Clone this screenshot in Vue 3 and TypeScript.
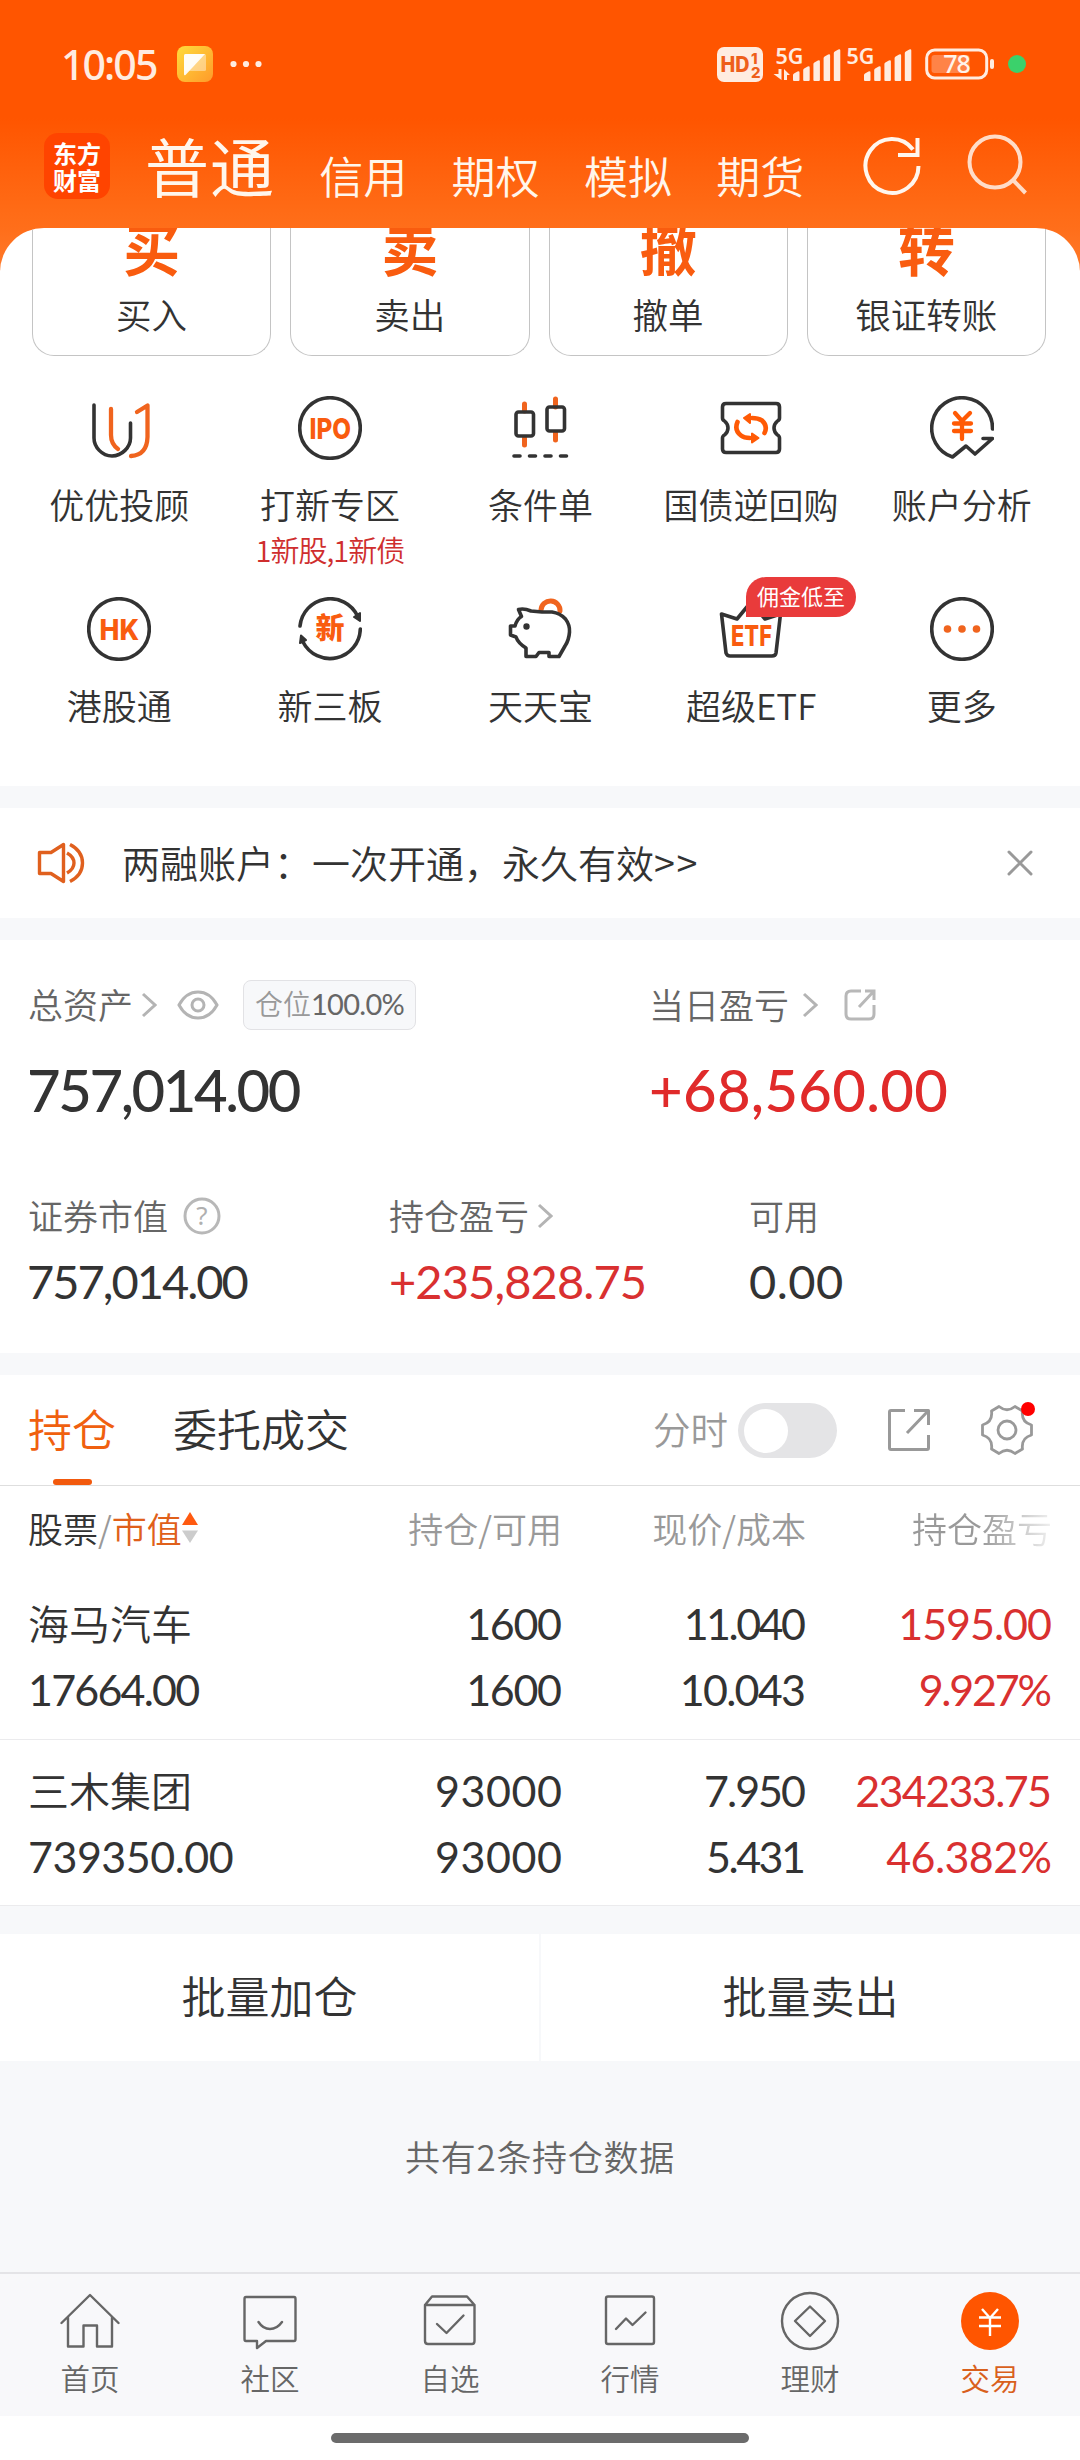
<script setup lang="ts">
interface Cell { text: string; ls: number }
interface Holding { name: string; value: Cell; hold: Cell; avail: Cell; price: Cell; cost: Cell; profit: Cell; ratio: Cell }

const accounts: string[] = ['信用', '期权', '模拟', '期货']
const quick = [
  { glyph: '买', label: '买入' },
  { glyph: '卖', label: '卖出' },
  { glyph: '撤', label: '撤单' },
  { glyph: '转', label: '银证转账' },
]
const tools: { id: string; label: string; sub?: string; badge?: string }[] = [
  { id: 'uu', label: '优优投顾' },
  { id: 'ipo', label: '打新专区', sub: '1新股,1新债' },
  { id: 'candle', label: '条件单' },
  { id: 'bond', label: '国债逆回购' },
  { id: 'analysis', label: '账户分析' },
  { id: 'hk', label: '港股通' },
  { id: 'neeq', label: '新三板' },
  { id: 'pig', label: '天天宝' },
  { id: 'etf', label: '超级ETF', badge: '佣金低至' },
  { id: 'more', label: '更多' },
]
const holdings: Holding[] = [
  {
    name: '海马汽车',
    value: { text: '17664.00', ls: -1.8 },
    hold: { text: '1600', ls: -1.3 },
    avail: { text: '1600', ls: -1.3 },
    price: { text: '11.040', ls: -2.5 },
    cost: { text: '10.043', ls: -1.7 },
    profit: { text: '1595.00', ls: -1 },
    ratio: { text: '9.927%', ls: -2.2 },
  },
  {
    name: '三木集团',
    value: { text: '739350.00', ls: -0.5 },
    hold: { text: '93000', ls: 0.6 },
    avail: { text: '93000', ls: 0.6 },
    price: { text: '7.950', ls: -2 },
    cost: { text: '5.431', ls: -2.5 },
    profit: { text: '234233.75', ls: -1.6 },
    ratio: { text: '46.382%', ls: -0.6 },
  },
]
const nav = [
  { id: 'home', label: '首页' },
  { id: 'community', label: '社区' },
  { id: 'watch', label: '自选' },
  { id: 'market', label: '行情' },
  { id: 'wealth', label: '理财' },
  { id: 'trade', label: '交易' },
]
const bars = [8, 13, 19, 25, 30]
const track = (c: Cell) => ({ letterSpacing: c.ls + 'px', marginRight: -c.ls + 'px' })
</script>

<template>
  <div class="page">
    <header class="top">
      <div class="status">
        <span class="time">10:05</span>
        <svg class="note" width="36" height="36" viewBox="0 0 36 36">
          <defs>
            <linearGradient id="noteFill" x1="0" y1="0" x2="1" y2="1">
              <stop offset="0" stop-color="#ffdc3c" /><stop offset="1" stop-color="#ff9a2a" />
            </linearGradient>
          </defs>
          <rect width="36" height="36" rx="8" fill="url(#noteFill)" />
          <rect x="7" y="8" width="22" height="17" rx="1.5" fill="#fff" opacity=".4" />
          <path d="M7 9.500Q7 8 8.500 8H28L8.500 29Q7 30 7 28Z" fill="#fff" opacity=".93" />
        </svg>
        <svg class="dots" width="32" height="8" viewBox="0 0 32 8" fill="#ffece0">
          <circle cx="3.500" cy="4" r="3.100" /><circle cx="16" cy="4" r="3.100" /><circle cx="28.500" cy="4" r="3.100" />
        </svg>
        <svg class="hd" width="46" height="35" viewBox="0 0 46 35">
          <rect width="46" height="35" rx="7" fill="#ffece0" />
          <text x="3.500" y="25" textLength="29" lengthAdjust="spacingAndGlyphs" class="hd-main">HD</text>
          <text x="34" y="16.500" class="hd-sub">1</text>
          <text x="34" y="31" class="hd-sub">2</text>
        </svg>
        <div v-for="sim in 2" :key="sim" class="sim">
          <svg width="68" height="36" viewBox="0 0 68 36" fill="#ffece0">
            <text x="1.500" y="17.500" class="net" textLength="28" lengthAdjust="spacingAndGlyphs">5G</text>
            <path v-if="sim === 1" d="M4.500 23h3v11L-.5 28h5ZM10 34V23l6 6h-3v5Z" />
            <path v-for="(h, i) in bars" :key="h" :d="`M${19 + i * 10.200} 34v${-h + 3}q0-1 1-1.600l3.500-2q2-.8 2 1v${h - 0.400}q0 1-1 1h-4.500q-1 0-1-1Z`" />
          </svg>
        </div>
        <svg class="battery" width="70" height="32" viewBox="0 0 70 32">
          <rect x="1.700" y="2" width="60" height="28" rx="8" fill="none" stroke="#ffece0" stroke-width="3" />
          <rect x="6.500" y="7" width="38" height="18" rx="3" fill="#ff8347" />
          <rect x="65" y="11" width="4" height="10" rx="2" fill="#ffece0" />
          <text x="31.500" y="25" text-anchor="middle" class="charge">78</text>
        </svg>
        <span class="live"></span>
      </div>
      <div class="nav-top">
        <div class="logo"><span>东方</span><span>财富</span></div>
        <h1>普通</h1>
        <span v-for="a in accounts" :key="a" class="account">{{ a }}</span>
        <svg class="refresh" width="64" height="64" viewBox="0 0 64 64" fill="none" stroke="#fff6ee" stroke-width="4">
          <path d="M58.500 33A26.500 27 0 1 1 53 16.500" /><path d="M38 22H57.500V5" />
        </svg>
        <svg class="search" width="64" height="64" viewBox="0 0 64 64" fill="none" stroke="#ffdcc8" stroke-width="4">
          <circle cx="31" cy="28" r="25.500" /><path d="M49 46L61.500 59" />
        </svg>
      </div>
    </header>

    <div class="sheet-wrap">
      <section class="sheet">
        <div class="quick">
          <div v-for="q in quick" :key="q.glyph" class="card"><b>{{ q.glyph }}</b><span>{{ q.label }}</span></div>
        </div>
        <div class="tools">
          <div v-for="t in tools" :key="t.id" class="tool">
            <div class="pic">
              <svg width="64" height="64" viewBox="0 0 64 64" fill="none" stroke="#333" stroke-width="3.600" stroke-linecap="round" stroke-linejoin="round">
                <template v-if="t.id === 'uu'">
                  <path d="M7 9V42C7 51 15 60 25 60S43.500 51 43.500 42V27" />
                  <path d="M24 13V39Q24 48 31 53M50 16L60.500 9.500V41Q60 59 44 60" stroke="#f0641e" stroke-width="4.300" />
                </template>
                <template v-else-if="t.id === 'ipo'">
                  <circle cx="32" cy="32" r="30.300" />
                  <text x="11.500" y="42.500" textLength="41.500" lengthAdjust="spacingAndGlyphs" class="glyph">IPO</text>
                </template>
                <template v-else-if="t.id === 'candle'">
                  <path d="M16.500 8V15M16.500 42V49M47.500 3V11M47.500 37V44" stroke="#f0641e" stroke-width="5" />
                  <rect x="8" y="16" width="17.500" height="24" rx="2.500" /><rect x="39" y="11" width="17.500" height="24" rx="2.500" />
                  <path d="M6 60H12M21.500 60H27.500M37 60H43M52.500 60H58.500" />
                </template>
                <template v-else-if="t.id === 'bond'">
                  <path d="M7 7.500H57Q60.500 7.500 60.500 11V22Q60.500 24 58.500 25Q55 28 55 32T58.500 39Q60.500 40 60.500 42V53Q60.500 56.500 57 56.500H7Q3.500 56.500 3.500 53V42Q3.500 40 5.500 39Q9 36 9 32T5.500 25Q3.500 24 3.500 22V11Q3.500 7.500 7 7.500Z" />
                  <path d="M18.500 26Q15 34 22 39.500Q25 42 31 42M45.500 37Q49 30 43 24.500Q39 22 33 22" stroke="#ff5a05" stroke-width="4.600" />
                  <path d="M31 18V27L25 22ZM33 37.500V46.500L39.500 42Z" fill="#ff5a05" stroke="#ff5a05" stroke-width="2" />
                </template>
                <template v-else-if="t.id === 'analysis'">
                  <path d="M62.500 33A30.400 30.400 0 1 0 22.500 61L36 50L45 58L62.500 42.500H53" />
                  <path d="M25 17L32 25L40 17M32 25V43M24 27.500H41M24 35H41" stroke="#ff5a05" stroke-width="4.300" />
                </template>
                <template v-else-if="t.id === 'hk'">
                  <circle cx="32" cy="32" r="30.300" />
                  <text x="12.500" y="42.500" textLength="39.500" lengthAdjust="spacingAndGlyphs" class="glyph">HK</text>
                </template>
                <template v-else-if="t.id === 'neeq'">
                  <path d="M2 29A30.300 30.300 0 0 1 59.500 19M62.300 32A30.300 30.300 0 0 1 5 45" />
                  <path d="M62 16V24L56 20ZM2 46L3 38.500L8 43Z" fill="#333" stroke-width="2" />
                  <text x="32" y="42" text-anchor="middle" class="glyph xin">新</text>
                </template>
                <template v-else-if="t.id === 'pig'">
                  <path d="M33 13A9.500 9.500 0 0 1 52 14" stroke="#f0641e" stroke-width="5" />
                  <path d="M10.500 12.500Q16 11 23 14L34 15H44Q52 16 57.500 22Q62 28 61.500 35Q61 43 57 49L51 59.500H41V55.500H31L28 59.500H18V51Q10 46 8 40L2.500 38V29H7Q9 22 13.500 19.500Z" />
                  <circle cx="18.500" cy="29.500" r="2.200" fill="#333" stroke-width="2" />
                </template>
                <template v-else-if="t.id === 'etf'">
                  <path d="M2.500 17L18 22L32 5L46 22L61.500 17L57 56Q56.500 59 53 59H11Q8 59 7 56Z" />
                  <text x="12" y="48.500" textLength="41" lengthAdjust="spacingAndGlyphs" class="glyph">ETF</text>
                </template>
                <template v-else>
                  <circle cx="32" cy="32" r="30.300" />
                  <g fill="#f0641e" stroke="none"><circle cx="17.500" cy="32" r="3.800" /><circle cx="32" cy="32" r="3.800" /><circle cx="46.500" cy="32" r="3.800" /></g>
                </template>
              </svg>
              <em v-if="t.badge" class="badge">{{ t.badge }}</em>
            </div>
            <span class="tool-label">{{ t.label }}</span>
            <span v-if="t.sub" class="tool-sub">{{ t.sub }}</span>
          </div>
        </div>
      </section>
    </div>

    <section class="notice">
      <svg width="48" height="44" viewBox="0 0 48 44" fill="none" stroke="#e0601e" stroke-width="3.400" stroke-linejoin="round">
        <path d="M2.500 11.500H14L26.500 3.500V40.500L14 32.500H2.500Z" /><path d="M30 12Q37 16 37 22T30 32M33 3.500Q45.500 10 45.500 22T33 40.500" />
      </svg>
      <p>两融账户：一次开通，永久有效<span>&gt;&gt;</span></p>
      <svg width="26" height="26" viewBox="0 0 26 26" stroke="#999" stroke-width="3" stroke-linecap="round"><path d="M2 2L24 24M24 2L2 24" /></svg>
    </section>

    <section class="assets">
      <div class="row totals">
        <div class="stat">
          <div class="label">
            <span>总资产</span>
            <svg class="chev" width="16" height="26" viewBox="0 0 16 26"><path d="M2 2L14 13L2 24" /></svg>
            <svg class="eye" width="42" height="30" viewBox="0 0 42 30" fill="none" stroke="#b4b4b4" stroke-width="3">
              <path d="M2 15Q9 2 21 2T40 15Q33 28 21 28T2 15Z" /><circle cx="21" cy="15" r="6" />
            </svg>
            <span class="tag">仓位<b>100.0%</b></span>
          </div>
          <div class="num big total">757,014.00</div>
        </div>
        <div class="stat">
          <div class="label">
            <span>当日盈亏</span>
            <svg class="chev far" width="16" height="26" viewBox="0 0 16 26"><path d="M2 2L14 13L2 24" /></svg>
            <svg class="share" width="32" height="32" viewBox="0 0 32 32" fill="none" stroke="#b8b8b8" stroke-width="3">
              <path d="M17 2H7Q2 2 2 7V25Q2 30 7 30H25Q30 30 30 25V16M21 2H30V11M30 2L15 18" />
            </svg>
          </div>
          <div class="num big red day">+68,560.00</div>
        </div>
      </div>
      <div class="row details">
        <div class="stat">
          <div class="label">
            <span>证券市值</span>
            <svg class="help" width="38" height="38" viewBox="0 0 38 38">
              <circle cx="19" cy="19" r="17" fill="none" stroke="#b8b8b8" stroke-width="3" /><text x="19" y="28" text-anchor="middle">?</text>
            </svg>
          </div>
          <div class="num mid market">757,014.00</div>
        </div>
        <div class="stat">
          <div class="label">
            <span>持仓盈亏</span>
            <svg class="chev" width="16" height="26" viewBox="0 0 16 26"><path d="M2 2L14 13L2 24" /></svg>
          </div>
          <div class="num mid red held">+235,828.75</div>
        </div>
        <div class="stat">
          <div class="label"><span>可用</span></div>
          <div class="num mid cash">0.00</div>
        </div>
      </div>
    </section>

    <section class="positions">
      <div class="tabs">
        <span class="tab active">持仓</span>
        <span class="tab">委托成交</span>
        <span class="minute">分时</span>
        <span class="switch"><i></i></span>
        <svg class="export" width="44" height="44" viewBox="0 0 44 44" fill="none" stroke="#999" stroke-width="3">
          <path d="M18 2.500H4Q2.500 2.500 2.500 4V40Q2.500 41.500 4 41.500H40Q41.500 41.500 41.500 40V27M27 2.500H41.500V17M41.500 2.500L20 25" stroke-linejoin="round" />
        </svg>
        <span class="gear">
          <svg width="54" height="54" viewBox="-27 -27 54 54" fill="none" stroke="#999" stroke-width="2.800" stroke-linejoin="round">
            <path d="M-8 -23.500Q0 -17 8 -23.500L15.500 -19Q14 -8 24.500 -5V5Q14 8 15.500 19L8 23.500Q0 17 -8 23.500L-15.500 19Q-14 8 -24.500 5V-5Q-14 -8 -15.500 -19Z" />
            <circle r="9" />
          </svg>
          <i></i>
        </span>
      </div>
      <div class="grid head">
        <div class="first">股票<i>/</i><em>市值</em>
          <svg width="16" height="32" viewBox="0 0 16 32"><path d="M8 0L16 13H0Z" fill="#ff5a10" /><path d="M8 31L16 18.500H0Z" fill="#ccc" /></svg>
        </div>
        <div>持仓/可用</div>
        <div>现价/成本</div>
        <div class="fade">持仓盈亏</div>
      </div>
      <div v-for="h in holdings" :key="h.name" class="grid item">
        <div class="first"><span class="name">{{ h.name }}</span><span class="num" :style="track(h.value)">{{ h.value.text }}</span></div>
        <div><span class="num" :style="track(h.hold)">{{ h.hold.text }}</span><span class="num" :style="track(h.avail)">{{ h.avail.text }}</span></div>
        <div><span class="num" :style="track(h.price)">{{ h.price.text }}</span><span class="num" :style="track(h.cost)">{{ h.cost.text }}</span></div>
        <div class="red"><span class="num" :style="track(h.profit)">{{ h.profit.text }}</span><span class="num" :style="track(h.ratio)">{{ h.ratio.text }}</span></div>
      </div>
    </section>

    <section class="batch"><span>批量加仓</span><span>批量卖出</span></section>
    <p class="summary">共有2条持仓数据</p>

    <nav class="bottom">
      <div v-for="n in nav" :key="n.id" class="nav-item" :class="{ on: n.id === 'trade' }">
        <svg width="60" height="60" viewBox="0 0 60 60" fill="none" stroke="#666" stroke-width="2.400" stroke-linejoin="round" stroke-linecap="round">
          <path v-if="n.id === 'home'" d="M1.500 32L30 4L58.500 32M8 26V55.500H23.500V34.500H37V55.500H52V26" />
          <path v-else-if="n.id === 'community'" d="M6 6H54Q55.500 6 55.500 8V48Q55.500 50 54 50H26L17 57V50H6Q4.500 50 4.500 48V8Q4.500 6 6 6ZM18.500 31Q23 38 30 38T42 31" />
          <path v-else-if="n.id === 'watch'" d="M5 14L12 5.500H47L54.500 14V50Q54.500 53 52 53H8Q5 53 5 50ZM5 14H54.500M17 33L26.500 42L43.500 24.500" />
          <path v-else-if="n.id === 'market'" d="M8 5.500H52Q54 5.500 54 7.500V51Q54 53 52 53H8Q6 53 6 51V7.500Q6 5.500 8 5.500ZM16 38L26 27.500L32.500 34L45.500 21.500" />
          <g v-else-if="n.id === 'wealth'"><circle cx="30" cy="30" r="28" /><path d="M30 15.500L45 30L30 45L15 30Z" /></g>
          <g v-else><circle cx="30" cy="30" r="29" fill="#ff5500" stroke="none" /><path d="M22 18L30 27L38 18M30 27V45M19 26.500H41M19 35H41" stroke="#fff" stroke-linecap="butt" /></g>
        </svg>
        <span>{{ n.label }}</span>
      </div>
    </nav>
    <div class="gesture"><i></i></div>
  </div>
</template>

<style>
body { margin: 0; background: #fff; }
</style>

<style scoped>
* { box-sizing: border-box; }
i, em { font-style: normal; }
svg { display: block; flex: none; }
.page { width: 1080px; height: 2460px; overflow: hidden; background: #f7f8fa; color: #333; font-family: "Noto Sans CJK SC", sans-serif; font-weight: 350; }
.num { font-family: Lato, "Noto Sans", sans-serif; font-weight: 400; white-space: nowrap; }
.red { color: #d93030; }

.top { height: 228px; background: linear-gradient(#ff5500 0, #ff5500 118px, #ff6c17 215px, #ff6e1a); }
.status { height: 128px; display: flex; align-items: center; padding-left: 61px; }
.time { width: 116px; font: 500 41px/50px "Noto Sans", sans-serif; color: #ffece0; letter-spacing: -1.900px; }
.dots { margin-left: 17px; }
.hd { margin-left: 455px; }
.hd-main { font: 800 21px Inter, sans-serif; fill: #ee5f1a; }
.hd-sub { font: 800 15px Inter, sans-serif; fill: #ee5f1a; }
.sim { margin-left: 11px; width: 60px; }
.sim svg { overflow: visible; }
.net { font: 600 22px "Noto Sans", sans-serif; }
.battery { margin-left: 20px; overflow: visible; }
.charge { font: 500 25px "Noto Sans", sans-serif; fill: #fff3ea; letter-spacing: -1px; }
.live { width: 18px; height: 18px; border-radius: 50%; background: #3bd16b; margin-left: 13px; }
.nav-top { height: 100px; display: flex; align-items: flex-start; padding-left: 44px; color: #fff6ec; }
.logo { width: 66px; height: 66px; margin-top: 5px; border-radius: 14px; background: #ff4400; display: flex; flex-direction: column; align-items: center; justify-content: center; color: #fff; font: 700 24px/27px "Noto Sans CJK SC", sans-serif; }
h1 { margin: 0 0 0 35px; width: 130px; font-size: 64px; line-height: 72px; font-weight: 400; letter-spacing: 1px; white-space: nowrap; }
.account { font-size: 44px; line-height: 60px; margin: 16.500px 0 0 44.300px; }
.refresh { margin: 5px 0 0 56px; }
.search { margin: 6px 0 0 40px; }

.sheet-wrap { height: 558px; background: linear-gradient(#ff6e1a, #ff7a2a 42px, #fff 43px); }
.sheet { height: 558px; background: #fff; border-radius: 44px 44px 0 0; overflow: hidden; }
.quick { display: grid; grid-template-columns: repeat(4, 1fr); gap: 19px; padding: 0 34px 0 32px; height: 128px; }
.card { border: 1.500px solid #c4c4c4; border-top: 0; border-radius: 0 0 22px 22px; display: flex; flex-direction: column; align-items: center; overflow: hidden; }
.card b { font-size: 57px; line-height: 70px; margin-top: -17px; color: #f95c0f; font-weight: 700; }
.card span { font-size: 35.500px; line-height: 50px; margin-top: 7.500px; }
.tools { display: grid; grid-template-columns: repeat(5, 1fr); grid-auto-rows: 201px; padding: 40px 13px 0 14px; }
.tool { display: flex; flex-direction: column; align-items: center; white-space: nowrap; }
.pic { position: relative; height: 64px; }
.glyph { font: 800 29px Inter, sans-serif; fill: #f95c0f; stroke: none; }
.xin { font: 900 29px "Noto Sans CJK SC", sans-serif; }
.badge { position: absolute; left: 27px; top: -20px; width: 110px; height: 40px; border-radius: 20px 20px 20px 0; background: #e93b3b; color: #fff; font-size: 22px; line-height: 37px; text-align: center; font-weight: 400; }
.tool-label { font-size: 35px; line-height: 50px; margin-top: 18.500px; }
.tool-sub { font-size: 29px; line-height: 40px; letter-spacing: -1px; color: #cf2e2e; }

.notice { margin-top: 22px; height: 110px; background: #fff; display: flex; align-items: center; padding: 0 47px 0 37px; }
.notice p { flex: 1; margin: 0 0 2px 37px; font-size: 38px; line-height: 60px; }
.notice p span { letter-spacing: 1.500px; }

.assets { margin-top: 22px; height: 413px; background: #fff; padding: 38px 27px 0; }
.row { display: flex; }
.totals .stat { width: 622px; flex: none; }
.details .stat { width: 360px; flex: none; }
.label { height: 54px; display: flex; align-items: center; font-size: 35px; color: #666; line-height: 50px; white-space: nowrap; }
.label > span:first-child { margin-left: 1px; margin-top: -3px; }
.totals .stat + .stat .label > span:first-child { margin-left: 0; }
.details .stat + .stat .label > span:first-child { margin-left: 2px; }
.chev { margin-left: 8px; fill: none; stroke: #b4b4b4; stroke-width: 3; }
.chev.far { margin-left: 13px; }
.eye { margin-left: 20px; }
.share { margin-left: 26px; }
.help { margin-left: 15px; }
.help text { font: 400 26px "Noto Sans", sans-serif; fill: #b0b0b0; }
.tag { margin-left: 24px; width: 173px; height: 50px; border: 1px solid #e2e2e5; border-radius: 8px; background: #f7f8fa; color: #999; font-size: 28px; line-height: 45px; text-align: center; }
.tag b { font: 400 29px Lato, sans-serif; color: #666; letter-spacing: -.7px; }
.big { font-size: 58px; line-height: 70px; margin-top: 23px; font-weight: 500; letter-spacing: -2.400px; }
.big.day { letter-spacing: .3px; color: #e02a2a; }
.totals { height: 211px; }
.mid { font-size: 47px; line-height: 60px; margin-top: 8px; letter-spacing: -2px; }
.mid.held { letter-spacing: -.9px; margin-left: 2px; }
.mid.cash { letter-spacing: .5px; margin-left: 2px; }

.positions { margin-top: 22px; height: 531px; background: #fff; border-bottom: 1px solid #ebebed; }
.tabs { height: 111px; border-bottom: 1.500px solid #dedede; display: flex; align-items: center; padding-left: 28px; }
.tab { position: relative; font-size: 44px; line-height: 60px; margin: -4px 57px 0 0; }
.tab.active { color: #f0600f; }
.tab.active::after { content: ""; position: absolute; left: 25px; bottom: -27px; width: 39px; height: 6px; border-radius: 3px; background: #f2590d; }
.minute { margin: -4px 0 0 247px; font-size: 37.500px; line-height: 50px; color: #999; }
.switch { width: 99px; height: 55px; margin-left: 10px; border-radius: 28px; background: #e4e4e6; padding: 6px; }
.switch i { display: block; width: 44px; height: 44px; border-radius: 50%; background: #fff; }
.export { margin-left: 50px; }
.gear { position: relative; margin-left: 49px; }
.gear i { position: absolute; width: 14px; height: 14px; border-radius: 50%; background: #f00; top: -1px; left: 41px; }
.grid { display: grid; grid-template-columns: 323px 211px 244px 246px; padding: 0 0 0 28px; text-align: right; white-space: nowrap; }
.head { height: 87px; font-size: 35px; line-height: 83px; color: #999; }
.first { text-align: left; }
.head .first { display: flex; align-items: center; height: 83px; color: #333; }
.head .first i { color: #999; }
.head .first em { color: #e0601a; }
.fade { background: linear-gradient(90deg, #999 0, #999 175px, #eee 244px); -webkit-background-clip: text; background-clip: text; color: transparent; }
.item { height: 166px; padding-top: 18px; font-size: 43px; line-height: 66px; }
.item + .item { border-top: 1px solid #ebebed; }
.item > div { display: flex; flex-direction: column; align-items: flex-end; }
.item > .first { align-items: flex-start; }
.name { font-size: 41px; margin: -2.500px 0 2.500px; }

.batch { margin-top: 28px; height: 127px; background: #fff; display: flex; }
.batch span { flex: 1; text-align: center; font-size: 44px; line-height: 122px; }
.batch span + span { border-left: 2px solid #f7f8fa; }
.summary { margin: 0; height: 211px; padding-top: 70px; text-align: center; font-size: 35px; line-height: 50px; letter-spacing: .7px; color: #666; }
.bottom { height: 144px; border-top: 2px solid #e4e4e7; background: #f8f8fa; display: flex; padding-top: 17px; }
.nav-item { flex: 1; display: flex; flex-direction: column; align-items: center; font-size: 29.500px; line-height: 40px; color: #666; }
.nav-item span { margin-top: 6px; }
.nav-item.on { color: #d9601c; }
.gesture { height: 44px; background: #fff; display: flex; justify-content: center; padding-top: 17px; }
.gesture i { width: 418px; height: 10px; border-radius: 5px; background: #6b6b6b; }
</style>
